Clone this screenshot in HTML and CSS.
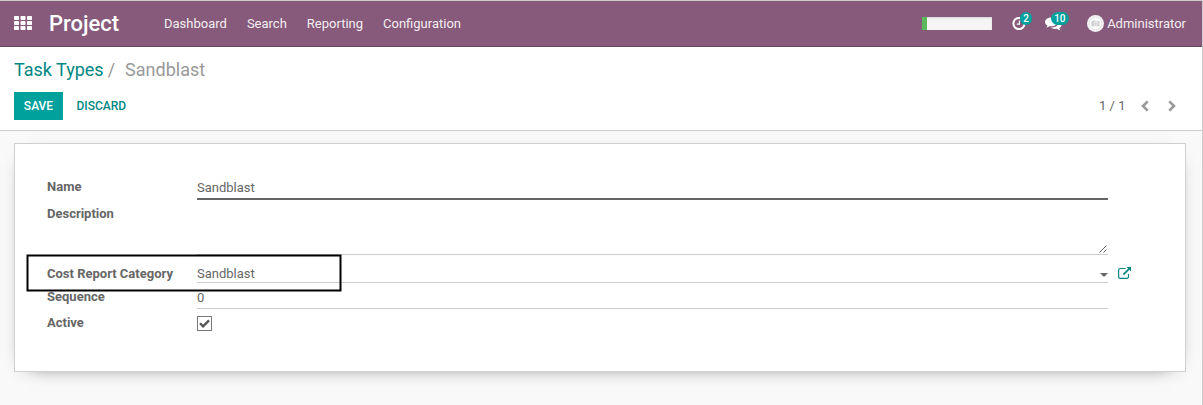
FILE: index.html
```html
<!DOCTYPE html>
<html lang="en">
<head>
<meta charset="utf-8">
<title>Task Types</title>
<link rel="stylesheet" href="styles.css">
</head>
<body>
<div class="app">
  <header class="navbar">
    <svg class="apps" width="18" height="14" viewBox="0 0 18 14" fill="#fff"><rect width="5" height="4" rx=".7"/><rect x="6.5" width="5" height="4" rx=".7"/><rect x="13" width="5" height="4" rx=".7"/><rect y="5" width="5" height="4" rx=".7"/><rect x="6.5" y="5" width="5" height="4" rx=".7"/><rect x="13" y="5" width="5" height="4" rx=".7"/><rect y="10" width="5" height="4" rx=".7"/><rect x="6.5" y="10" width="5" height="4" rx=".7"/><rect x="13" y="10" width="5" height="4" rx=".7"/></svg>
    <span class="brand">Project</span>
    <nav class="menu"><a>Dashboard</a><a>Search</a><a>Reporting</a><a>Configuration</a></nav>
    <div class="systray">
      <div class="progress"><div class="progress-fill"></div></div>
      <div class="tray activity">
        <svg width="14" height="14" viewBox="0 0 14 14" fill="none" stroke="#fff"><circle cx="7" cy="6.500" r="5.600" stroke-width="2"/><path d="M7.400 3.500v3.600H4.800" stroke-width="1.200"/></svg>
        <span class="badge">2</span>
      </div>
      <div class="tray chat">
        <svg width="17" height="14" viewBox="0 0 17 14" fill="#fff"><path d="M6.500 0.500C10 .5 12.500 2.500 12.500 5S10 9.300 6.500 9.300c-.6 0-1.100 0-1.600-.2C3.800 10 2.500 10.500 1.100 10.600c.7-.7 1.200-1.300 1.300-2.200C.9 7.600 0 6.400 0 5 0 2.500 3 .5 6.500.5z"/><path d="M14 4.500c1.500.8 2.500 2 2.500 3.400 0 1.300-.9 2.500-2.200 3.200.1.900.6 1.500 1.300 2.200-1.500-.1-2.800-.6-3.900-1.500-2.100.4-4.500 0-5.900-1.300C10.500 10.600 14 8.500 14 4.500z"/></svg>
        <span class="badge">10</span>
      </div>
      <div class="user">
        <svg width="17" height="17" viewBox="0 0 17 17"><circle cx="8.500" cy="8.500" r="8.500" fill="#f4f2f3"/><circle cx="8.500" cy="8.500" r="6.300" fill="#fff" stroke="#dedede" stroke-width=".8"/><path d="M4.500 6.200h1l.5-.7h2l.5.700h4v5.100h-8z" fill="#ccc"/><circle cx="8.700" cy="8.700" r="1.700" fill="#ccc" stroke="#fff" stroke-width=".8"/></svg>
        <span>Administrator</span>
      </div>
    </div>
  </header>
  <section class="control">
    <div class="breadcrumb"><a>Task Types</a><span class="slash">/</span><span>Sandblast</span></div>
    <div class="actions">
      <button class="save">SAVE</button><button class="discard">DISCARD</button>
      <div class="pager"><span>1 / 1</span>
        <svg class="prev" width="8" height="12" viewBox="0 0 8 12"><path d="M6.700 1.300L2 6l4.700 4.700"/></svg>
        <svg class="next" width="8" height="12" viewBox="0 0 8 12"><path d="M1.300 1.300L6 6l-4.700 4.700"/></svg>
      </div>
    </div>
  </section>
  <main class="content">
    <form class="sheet">
      <div class="row name"><label>Name</label><div class="field">Sandblast</div></div>
      <div class="row description"><label>Description</label><div class="field"><svg width="8" height="8" viewBox="0 0 8 8" stroke="#555" stroke-width=".9"><path d="M.5 7.500L7.500.5M4.500 7.500l3-3"/></svg></div></div>
      <div class="row category"><label>Cost Report Category</label><div class="field"><span>Sandblast</span><i class="caret"></i></div>
        <svg class="external" width="14" height="12" viewBox="0 0 14 12" fill="none" stroke="#008784"><path d="M7.500 1.500H2.200C1.300 1.500.6 2.100.6 3v6.800c0 .9.700 1.600 1.600 1.600H9c.9 0 1.500-.7 1.500-1.600V7" stroke-width="1.200"/><path d="M5.300 7.700l5.500-5.500" stroke-width="1.800"/><path d="M8.500 0H13v4.500z" fill="#008784" stroke="none"/></svg>
      </div>
      <div class="row sequence"><label>Sequence</label><div class="field">0</div></div>
      <div class="row active"><label>Active</label><span class="check"><svg width="11" height="9" viewBox="0 0 11 9"><path d="M1 4.200L4.100 7.300 10 1.400" fill="none" stroke="#555" stroke-width="2.300"/></svg></span></div>
      <svg class="highlight" width="316" height="38" viewBox="0 0 316 38"><rect x="1.5" y="1.5" width="313" height="35" fill="none" stroke="#000" stroke-width="2"/></svg>
    </form>
  </main>
</div>
</body>
</html>
```
FILE: styles.css
```css
* { box-sizing: border-box; }
body { margin: 0; font: 13px/18px Roboto, sans-serif; color: #666; }
svg { display: block; flex: none; }
.app { width: 1203px; height: 405px; overflow: hidden; display: flex; flex-direction: column; border-top: 1px solid #ccc; border-right: 1px solid #ccc; background: #f9f9f9; }
.navbar { flex: none; height: 46px; display: flex; align-items: center; background: #875a7b; border-bottom: 1px solid #68465f; color: #f3eef2; padding: 0 16px 0 14px; }
.apps { margin-bottom: 1px; }
.brand { margin-left: 17px; width: 115px; font-size: 22px; font-weight: 500; line-height: 45px; color: #fff; }
.menu { display: flex; gap: 20px; }
.systray { margin-left: auto; display: flex; align-items: center; height: 45px; }
.progress { width: 70px; height: 13px; background: #f5f5f5; box-shadow: inset 0 1px 2px #0002; }
.progress-fill { width: 5px; height: 13px; background: #5cb85c; }
.tray { position: relative; }
.activity { margin-left: 20px; width: 14px; }
.chat { margin-left: 19px; width: 17px; }
.badge { position: absolute; left: 8px; top: -5px; height: 13px; padding: 0 3px; border-radius: 7px; background: #00a09d; color: #fff; font-size: 10px; font-weight: 500; line-height: 13px; }
.chat .badge { left: 6px; }
.user { margin-left: 25px; display: flex; align-items: center; gap: 3px; }
.control { flex: none; height: 84px; background: #fff; border-bottom: 1px solid #ccc; padding: 12px 26px 0 14px; }
.breadcrumb { display: flex; font-size: 18px; line-height: 22px; color: #999; }
.breadcrumb a { color: #008784; }
.slash { margin: 0 10px 0 4px; }
.actions { display: flex; align-items: center; margin-top: 11px; height: 28px; }
button { border: 0; padding: 0; font: 500 12px/28px Roboto, sans-serif; }
.save { width: 49px; height: 28px; background: #00a09d; color: #fff; }
.discard { margin-left: 13.5px; background: none; color: #008784; }
.pager { margin-left: auto; display: flex; align-items: center; }
.pager path { fill: none; stroke: #999; stroke-width: 2.600; }
.prev { margin-left: 15.5px; }
.next { margin-left: 19px; }
.content { padding: 12px 16px 0 14px; }
.sheet { position: relative; height: 229px; background: #fff; border: 1px solid #d0d0d0; box-shadow: 0 5px 20px -15px #000; padding: 32px 77px 0 32px; }
.row { display: flex; align-items: flex-start; }
.row label { width: 150px; flex: none; font-weight: 700; }
.field { width: 911px; flex: none; height: 100%; border-bottom: 1px solid #ccc; }
.name { height: 24px; }
.name label { padding-top: 2px; }
.name .field { border-bottom: 2px solid #666; padding-top: 3px; }
.description { height: 55px; }
.description label { padding-top: 5px; }
.description .field { display: flex; align-items: flex-end; justify-content: flex-end; padding: 0 1px 1px 0; }
.category { height: 28px; }
.category label { padding-top: 10px; }
.category .field { display: flex; justify-content: space-between; padding-top: 10px; }
.caret { margin-top: 8px; border: 4px solid transparent; border-top-color: #666; border-bottom: 0; height: 0; }
.external { margin: 12px 0 0 10px; }
.sequence { height: 26px; }
.sequence label { padding-top: 5px; }
.sequence .field { padding-top: 6px; }
.active label { padding-top: 5px; }
.check { width: 15px; height: 15px; margin-top: 7px; border: 1px solid #777; display: flex; align-items: center; justify-content: center; }
.highlight { position: absolute; left: 11px; top: 110px; }
```
